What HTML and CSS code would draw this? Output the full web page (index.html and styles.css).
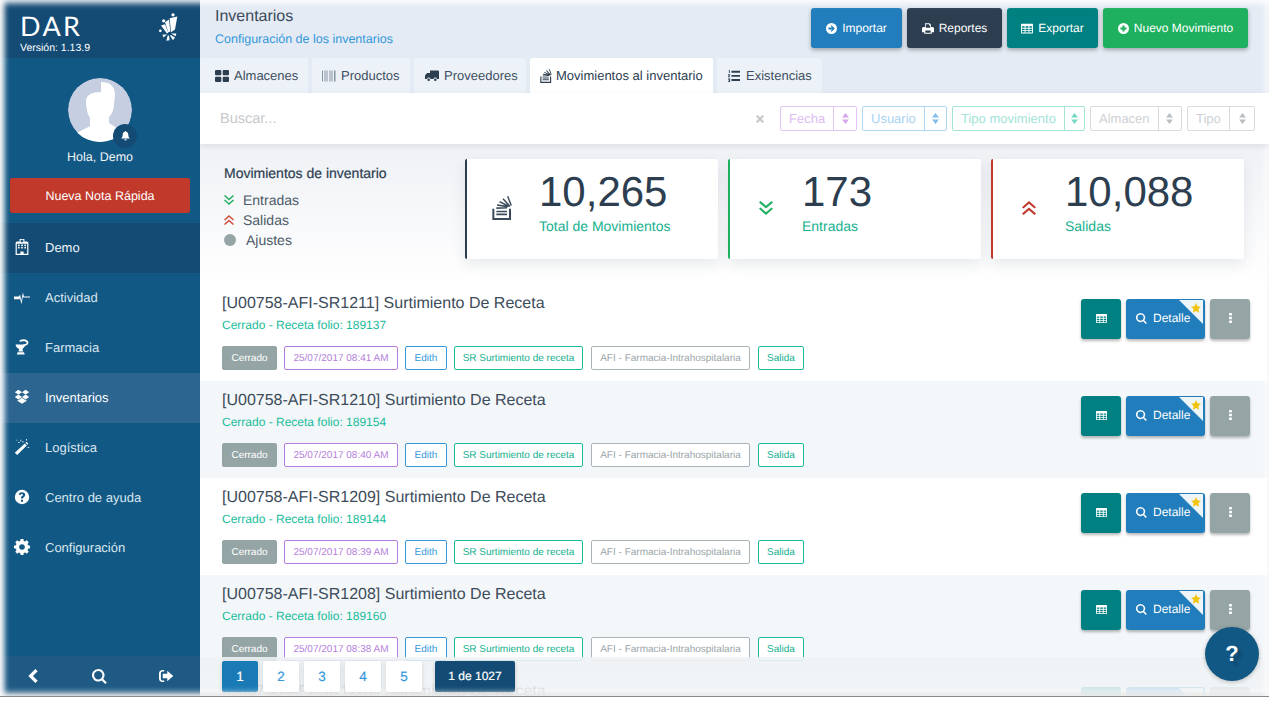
FILE: index.html
```html
<!DOCTYPE html>
<html lang="es">
<head>
<meta charset="utf-8">
<title>Inventarios</title>
<link rel="stylesheet" href="styles.css">
</head>
<body>
<svg class="defs" aria-hidden="true">
  <symbol id="i-hospital" viewBox="0 0 16 20"><path d="M5 0h6v3h3a2 2 0 0 1 2 2v15H0V5a2 2 0 0 1 2-2h3zm2 1v1H6v1h1v1h2V3h1V2H9V1zM1.500 6v12.500H6v-3h4v3h4.500V6zm1.500 1h2v2H3zm4 0h2v2H7zm4 0h2v2h-2zm-8 3h2v2H3zm4 0h2v2H7zm4 0h2v2h-2z" fill-rule="evenodd"/></symbol>
  <symbol id="i-pulse" viewBox="0 0 24 14"><path d="M0 6.200h7.500l1.600-3 1.800 9 2.400-12 1.700 6h9v1.600h-10l-.6-1.500-2.400 11.700-1.900-9.300-.8 1.700H0z"/></symbol>
  <symbol id="i-mortar" viewBox="0 0 18 20"><path d="M1 7h12a6.500 6.500 0 0 1-3.500 5.500l1 3H4.500l1-3A6.500 6.500 0 0 1 1 7zM3.500 16.500h8l1 3h-10z"/><path d="M6 1.500c5-2.500 11-1 11 3 0 3-3.500 4.500-6.500 4.500V7c2.500 0 4.300-1 4.300-2.500S11 2 6 3.500z"/></symbol>
  <symbol id="i-dropbox" viewBox="0 0 20 18"><path d="M5.500 0 10 3 5.500 6 1 3zM14.500 0 19 3l-4.500 3L10 3zM5.500 6 10 9l-4.500 3L1 9zM14.500 6 19 9l-4.500 3L10 9zM5.500 13l4.500-3 4.500 3 1-.6V14L10 17.500 4.500 14v-1.600z"/></symbol>
  <symbol id="i-wand" viewBox="0 0 20 20"><path d="M13.500 5.500 16 8 4 20l-3-2.800zM15.500 3.500 18 6l-1.200 1.200-2.500-2.500z"/><path d="M8 1h1v2H8zm-3 3h2v1H5zm5-1h2v1h-2zm7 7h2v1h-2zM15 0h1v2h-1zM3 1h1v1H3z"/></symbol>
  <symbol id="i-help" viewBox="0 0 20 20"><path fill-rule="evenodd" d="M10 1a9 9 0 1 1 0 18 9 9 0 0 1 0-18zM8.700 13.300v2.500h2.600v-2.500zM10 4.200c-2.100 0-3.500 1-4 2.700l2 .9c.4-.9 1-1.400 1.900-1.400.8 0 1.300.4 1.300 1 0 .7-.5 1-1.200 1.500-.9.600-1.300 1.300-1.300 2.200v.8h2.600v-.5c0-.5.300-.8 1-1.200 1-.7 1.700-1.500 1.700-2.900 0-1.800-1.600-3.100-4-3.100z"/></symbol>
  <symbol id="i-cog" viewBox="0 0 20 20"><path fill-rule="evenodd" d="M8.200 0h3.600l.4 2.500 1.700.7 2-1.500 2.500 2.500-1.500 2 .7 1.700 2.400.4v3.400l-2.400.4-.7 1.700 1.500 2-2.500 2.500-2-1.500-1.700.7-.4 2.400H8.200l-.4-2.400-1.700-.7-2 1.500-2.500-2.500 1.500-2-.7-1.700L0 11.700V8.300l2.400-.4.7-1.700-1.500-2 2.500-2.500 2 1.500 1.700-.7zM10 6.500a3.500 3.500 0 1 0 0 7 3.500 3.500 0 0 0 0-7z"/></symbol>
  <symbol id="i-left" viewBox="0 0 12 18"><path d="M9 0l3 3-6 6 6 6-3 3-9-9z"/></symbol>
  <symbol id="i-search" viewBox="0 0 18 18"><path fill-rule="evenodd" d="M7.500 0a7.500 7.500 0 0 1 6 12l4.300 4.200-1.900 1.800-4.200-4.300A7.500 7.500 0 1 1 7.500 0zm0 2.500a5 5 0 1 0 0 10 5 5 0 0 0 0-10z"/></symbol>
  <symbol id="i-signout" viewBox="0 0 20 16"><path d="M5 0h2v2H4.500C3.500 2 2.500 3 2.500 4v8c0 1 1 2 2 2H7v2H5C2 16 0 14 0 11.500v-7C0 2 2 0 5 0z"/><path d="M11 1l8 7-8 7v-4H5V5h6z"/></symbol>
  <symbol id="i-bell" viewBox="0 0 14 16"><path d="M7 0a1 1 0 0 1 1 1.100C10.300 1.500 11.500 3.300 11.500 6c0 3 .8 4.700 2.500 6H0c1.700-1.300 2.500-3 2.500-6C2.500 3.300 3.700 1.500 6 1.100A1 1 0 0 1 7 0zM5 13h4a2 2 0 0 1-4 0z"/></symbol>
  <symbol id="i-grid" viewBox="0 0 14 12"><rect width="6.300" height="5.300" rx="1"/><rect x="7.700" width="6.300" height="5.300" rx="1"/><rect y="6.700" width="6.300" height="5.300" rx="1"/><rect x="7.700" y="6.700" width="6.300" height="5.300" rx="1"/></symbol>
  <symbol id="i-barcode" viewBox="0 0 14 11"><path d="M0 0h1v11H0zm2 0h.5v11H2zm1.500 0h1v11h-1zm2 0H6v11h-.5zm1.500 0h.5v11H7zm1.500 0h1v11h-1zm2 0h.5v11h-.5zm1.500 0h1.500v11H12z"/></symbol>
  <symbol id="i-truck" viewBox="0 0 14 11"><path d="M5 0h8a1 1 0 0 1 1 1v7.500h-2a1.800 1.800 0 0 0-3.500 0H5.500a1.800 1.800 0 0 0-3.500 0H0V5l2-2.500h3z"/><circle cx="3.700" cy="9.200" r="1.300"/><circle cx="10.300" cy="9.200" r="1.300"/></symbol>
  <symbol id="i-stack" viewBox="0 0 16 18"><path d="M0 9.500h1.500v7h11v-7H14V18H0z"/><path d="M3 11h8v1.200H3zm0 2.200h8v1.200H3zM3 8.500l8-.3v1.200l-8 .3zM3.700 6.200l7.900 1.200-.2 1.200-7.900-1.200zM5.600 3.700l7 3.500-.5 1-7-3.500zM8.400 1.700l5.300 5.800-.8.800-5.300-5.800zM12 0l2.700 7-1 .4L11 .4z"/></symbol>
  <symbol id="i-listol" viewBox="0 0 14 14"><path d="M4 1h10v2.200H4zm0 4.800h10V8H4zm0 4.800h10v2.200H4zM1 0h1v3.500H1zM0 5h2.500v1L1 7.500h1.500v1H0v-1L1.500 6H0zm0 5h2.500v4H0v-1h1.500v-.5H.8v-1h.7V11H0z"/></symbol>
  <symbol id="i-arrow-circle" viewBox="0 0 16 16"><path fill-rule="evenodd" d="M8 0a8 8 0 1 1 0 16A8 8 0 0 1 8 0zm0 3.200L6.800 4.400l2 2.100H3.500v3h5.300l-2 2.100L8 12.800 12.800 8z"/></symbol>
  <symbol id="i-print" viewBox="0 0 16 14"><path fill-rule="evenodd" d="M4 0h6l2 2v3h2a2 2 0 0 1 2 2v5h-3v2H3v-2H0V7a2 2 0 0 1 2-2h2zm1 1.200V6h6V3h-1.500V1.200zM4.500 9.500v3.300h7V9.500z"/></symbol>
  <symbol id="i-table" viewBox="0 0 16 13"><path fill-rule="evenodd" d="M1 0h14a1 1 0 0 1 1 1v11a1 1 0 0 1-1 1H1a1 1 0 0 1-1-1V1a1 1 0 0 1 1-1zm.2 3.500v2h3.600v-2zm4.800 0v2h4v-2zm5.200 0v2h3.600v-2zM1.200 6.700v2h3.600v-2zm4.800 0v2h4v-2zm5.200 0v2h3.600v-2zM1.200 9.900v2h3.600v-2zm4.800 0v2h4v-2zm5.200 0v2h3.600v-2z"/></symbol>
  <symbol id="i-plus-circle" viewBox="0 0 16 16"><path fill-rule="evenodd" d="M8 0a8 8 0 1 1 0 16A8 8 0 0 1 8 0zM6.500 3.500v3h-3v3h3v3h3v-3h3v-3h-3v-3z"/></symbol>
  <symbol id="i-times" viewBox="0 0 10 10"><path d="M2 0l3 3 3-3 2 2-3 3 3 3-2 2-3-3-3 3-2-2 3-3-3-3z"/></symbol>
  <symbol id="i-sort" viewBox="0 0 10 16"><path d="M5 0l5 6.500H0zM5 16l5-6.500H0z"/></symbol>
  <symbol id="i-dbl-down" viewBox="0 0 14 14"><path d="M1.500 0 7 4.800 12.500 0 14 1.400 7 7.600 0 1.400zM1.500 6.400 7 11.200l5.500-4.800L14 7.800 7 14 0 7.800z"/></symbol>
  <symbol id="i-dbl-up" viewBox="0 0 14 14"><path d="M1.500 14 7 9.200l5.500 4.800 1.500-1.400-7-6.200-7 6.200zM1.500 7.600 7 2.800l5.500 4.800L14 6.200 7 0 0 6.200z"/></symbol>
  <symbol id="i-dots" viewBox="0 0 4 14"><rect width="4" height="3.400" rx=".5"/><rect y="5.300" width="4" height="3.400" rx=".5"/><rect y="10.600" width="4" height="3.400" rx=".5"/></symbol>
  <symbol id="i-star" viewBox="0 0 10 10"><path d="M5 0l1.500 3.300 3.500.4-2.600 2.400.7 3.600L5 8l-3.100 1.700.7-3.600L0 3.700l3.500-.4z"/></symbol>
  <symbol id="i-brand" viewBox="30 20 60 92"><circle cx="72" cy="28" r="5"/><circle cx="44" cy="46" r="5"/><circle cx="34" cy="76" r="4"/><path d="M62 38 85 33 78 72 66 80zM48 50 60 42 64 78 58 80zM36 60 48 56 58 82 54 84zM40 88 54 86 44 96zM56 90 60 90 62 104 52 106zM64 88 78 96 72 104 64 92zM66 84 82 84 80 92z"/></symbol>
</svg>

<div class="window">
  <aside class="sidebar">
    <div class="brand">
      <div class="brand-text">
        <div class="brand-name">DAR</div>
        <div class="brand-version">Versión: 1.13.9</div>
      </div>
      <svg class="brand-mark"><use href="#i-brand"/></svg>
    </div>
    <div class="profile">
      <div class="avatar">
        <svg class="avatar-pic" viewBox="0 0 64 64">
          <circle cx="32" cy="32" r="32" fill="#c5cfe1"/>
          <path d="M33 4c9 0 14 4 14 13l-1 9c0 5-2 10-5 13v6l14 9v10H5v-6c4-4 12-7 17-10v-8c-2-3-3-6-3-9-1-3-1-6-1-8 0-6 6-9 15-9z" fill="#fff"/>
        </svg>
        <span class="avatar-bell"><svg><use href="#i-bell"/></svg></span>
      </div>
      <div class="greeting">Hola, Demo</div>
      <button class="note-btn">Nueva Nota Rápida</button>
    </div>
    <nav class="menu">
      <a class="menu-item menu-dark"><svg class="menu-icon"><use href="#i-hospital"/></svg>Demo</a>
      <a class="menu-item"><svg class="menu-icon"><use href="#i-pulse"/></svg>Actividad</a>
      <a class="menu-item"><svg class="menu-icon"><use href="#i-mortar"/></svg>Farmacia</a>
      <a class="menu-item menu-active"><svg class="menu-icon"><use href="#i-dropbox"/></svg>Inventarios</a>
      <a class="menu-item"><svg class="menu-icon"><use href="#i-wand"/></svg>Logística</a>
      <a class="menu-item"><svg class="menu-icon"><use href="#i-help"/></svg>Centro de ayuda</a>
      <a class="menu-item"><svg class="menu-icon"><use href="#i-cog"/></svg>Configuración</a>
    </nav>
    <div class="side-foot">
      <svg class="foot-left"><use href="#i-left"/></svg>
      <svg class="foot-search"><use href="#i-search"/></svg>
      <svg class="foot-out"><use href="#i-signout"/></svg>
    </div>
  </aside>

  <main class="main">
    <header class="top">
      <div class="top-title">
        <h1>Inventarios</h1>
        <a class="top-link">Configuración de los inventarios</a>
      </div>
      <div class="top-actions">
        <button class="act act-blue"><svg><use href="#i-arrow-circle"/></svg>Importar</button>
        <button class="act act-navy"><svg><use href="#i-print"/></svg>Reportes</button>
        <button class="act act-teal"><svg><use href="#i-table"/></svg>Exportar</button>
        <button class="act act-green"><svg><use href="#i-plus-circle"/></svg>Nuevo Movimiento</button>
      </div>
    </header>

    <div class="tabs">
      <a class="tab tab-a"><svg><use href="#i-grid"/></svg>Almacenes</a>
      <a class="tab tab-b"><svg><use href="#i-barcode"/></svg>Productos</a>
      <a class="tab tab-c"><svg><use href="#i-truck"/></svg>Proveedores</a>
      <a class="tab tab-d tab-on"><svg><use href="#i-stack"/></svg>Movimientos al inventario</a>
      <a class="tab tab-e"><svg><use href="#i-listol"/></svg>Existencias</a>
    </div>

    <div class="searchbar">
      <span class="search-input">Buscar...</span>
      <span class="clear"><svg><use href="#i-times"/></svg></span>
      <div class="select sel-purple"><span>Fecha</span><i><svg><use href="#i-sort"/></svg></i></div>
      <div class="select sel-blue"><span>Usuario</span><i><svg><use href="#i-sort"/></svg></i></div>
      <div class="select sel-green"><span>Tipo movimiento</span><i><svg><use href="#i-sort"/></svg></i></div>
      <div class="select sel-gray sel-wide"><span>Almacen</span><i><svg><use href="#i-sort"/></svg></i></div>
      <div class="select sel-gray sel-short"><span>Tipo</span><i><svg><use href="#i-sort"/></svg></i></div>
    </div>

    <section class="stats">
      <div class="legend">
        <h2>Movimientos de inventario</h2>
        <div class="legend-item"><svg class="lg-down"><use href="#i-dbl-down"/></svg>Entradas</div>
        <div class="legend-item"><svg class="lg-up"><use href="#i-dbl-up"/></svg>Salidas</div>
        <div class="legend-item legend-dot"><b></b>Ajustes</div>
      </div>
      <div class="card card-navy">
        <svg class="card-icon ci-stack"><use href="#i-stack"/></svg>
        <div><div class="card-num">10,265</div><div class="card-label">Total de Movimientos</div></div>
      </div>
      <div class="card card-green">
        <svg class="card-icon ci-down"><use href="#i-dbl-down"/></svg>
        <div><div class="card-num">173</div><div class="card-label">Entradas</div></div>
      </div>
      <div class="card card-red">
        <svg class="card-icon ci-up"><use href="#i-dbl-up"/></svg>
        <div><div class="card-num">10,088</div><div class="card-label">Salidas</div></div>
      </div>
    </section>

    <section class="list">
      <article class="row">
        <div class="row-info">
          <h3>[U00758-AFI-SR1211] Surtimiento De Receta</h3>
          <p>Cerrado - Receta folio: 189137</p>
          <div class="tags"><span class="tag t-closed">Cerrado</span><span class="tag t-date">25/07/2017 08:41 AM</span><span class="tag t-user">Edith</span><span class="tag t-type">SR Surtimiento de receta</span><span class="tag t-place">AFI - Farmacia-Intrahospitalaria</span><span class="tag t-out">Salida</span></div>
        </div>
        <div class="row-actions"><button class="ra ra-table"><svg><use href="#i-table"/></svg></button><button class="ra ra-detail"><svg><use href="#i-search"/></svg>Detalle<span class="fold"></span><svg class="fold-star"><use href="#i-star"/></svg></button><button class="ra ra-more"><svg><use href="#i-dots"/></svg></button></div>
      </article>
      <article class="row row-alt">
        <div class="row-info">
          <h3>[U00758-AFI-SR1210] Surtimiento De Receta</h3>
          <p>Cerrado - Receta folio: 189154</p>
          <div class="tags"><span class="tag t-closed">Cerrado</span><span class="tag t-date">25/07/2017 08:40 AM</span><span class="tag t-user">Edith</span><span class="tag t-type">SR Surtimiento de receta</span><span class="tag t-place">AFI - Farmacia-Intrahospitalaria</span><span class="tag t-out">Salida</span></div>
        </div>
        <div class="row-actions"><button class="ra ra-table"><svg><use href="#i-table"/></svg></button><button class="ra ra-detail"><svg><use href="#i-search"/></svg>Detalle<span class="fold"></span><svg class="fold-star"><use href="#i-star"/></svg></button><button class="ra ra-more"><svg><use href="#i-dots"/></svg></button></div>
      </article>
      <article class="row">
        <div class="row-info">
          <h3>[U00758-AFI-SR1209] Surtimiento De Receta</h3>
          <p>Cerrado - Receta folio: 189144</p>
          <div class="tags"><span class="tag t-closed">Cerrado</span><span class="tag t-date">25/07/2017 08:39 AM</span><span class="tag t-user">Edith</span><span class="tag t-type">SR Surtimiento de receta</span><span class="tag t-place">AFI - Farmacia-Intrahospitalaria</span><span class="tag t-out">Salida</span></div>
        </div>
        <div class="row-actions"><button class="ra ra-table"><svg><use href="#i-table"/></svg></button><button class="ra ra-detail"><svg><use href="#i-search"/></svg>Detalle<span class="fold"></span><svg class="fold-star"><use href="#i-star"/></svg></button><button class="ra ra-more"><svg><use href="#i-dots"/></svg></button></div>
      </article>
      <article class="row row-alt">
        <div class="row-info">
          <h3>[U00758-AFI-SR1208] Surtimiento De Receta</h3>
          <p>Cerrado - Receta folio: 189160</p>
          <div class="tags"><span class="tag t-closed">Cerrado</span><span class="tag t-date">25/07/2017 08:38 AM</span><span class="tag t-user">Edith</span><span class="tag t-type">SR Surtimiento de receta</span><span class="tag t-place">AFI - Farmacia-Intrahospitalaria</span><span class="tag t-out">Salida</span></div>
        </div>
        <div class="row-actions"><button class="ra ra-table"><svg><use href="#i-table"/></svg></button><button class="ra ra-detail"><svg><use href="#i-search"/></svg>Detalle<span class="fold"></span><svg class="fold-star"><use href="#i-star"/></svg></button><button class="ra ra-more"><svg><use href="#i-dots"/></svg></button></div>
      </article>
      <article class="row">
        <div class="row-info">
          <h3>[U00758-AFI-SR1207] Surtimiento De Receta</h3>
        </div>
        <div class="row-actions"><button class="ra ra-table"><svg><use href="#i-table"/></svg></button><button class="ra ra-detail"><svg><use href="#i-search"/></svg>Detalle<span class="fold"></span><svg class="fold-star"><use href="#i-star"/></svg></button><button class="ra ra-more"><svg><use href="#i-dots"/></svg></button></div>
      </article>
    </section>

    <div class="pager">
      <a class="page page-on">1</a>
      <a class="page">2</a>
      <a class="page">3</a>
      <a class="page">4</a>
      <a class="page">5</a>
      <span class="page-total">1 de 1027</span>
    </div>
    <button class="help"><span class="help-q">?</span></button>
  </main>
  <div class="edge"></div>
</div>
</body>
</html>
```

FILE: styles.css
```css
* { box-sizing: border-box; }
html, body { margin: 0; height: 100%; overflow: hidden; background: #fff; }
body { font-family: "Liberation Sans", Arial, sans-serif; color: #2c3e50; text-rendering: geometricPrecision; }
button { font-family: inherit; border: 0; cursor: pointer; text-rendering: geometricPrecision; }
svg { fill: currentColor; display: block; }
.defs { position: absolute; width: 0; height: 0; }

.window { position: relative; display: flex; height: 697px; overflow: hidden; border-bottom: 1px solid #8a8a8a; }
.edge { position: absolute; inset: 0; pointer-events: none; box-shadow: inset 0 0 6px 3px rgba(255,255,255,.95), inset 6px 0 6px -3px rgba(255,255,255,.8), inset 0 -2px 3px rgba(90,90,90,.45); }

/* sidebar */
.sidebar { width: 200px; flex: none; background: #125884; color: #fff; display: flex; flex-direction: column; }
.brand { height: 58px; background: #134b75; display: flex; justify-content: space-between; padding: 13px 21px 0 20px; }
.brand-name { font-family: "Lato", sans-serif; font-size: 27px; line-height: 25px; letter-spacing: 2.4px; }
.brand-version { font-size: 10.500px; line-height: 12px; margin-top: 4px; }
.brand-mark { width: 20px; height: 31px; margin-top: -1px; }
.profile { height: 165px; display: flex; flex-direction: column; align-items: center; padding-top: 20px; }
.avatar { position: relative; width: 64px; height: 64px; }
.avatar-pic { width: 64px; height: 64px; border-radius: 50%; }
.avatar-bell { position: absolute; left: 45px; top: 46px; width: 24px; height: 24px; border-radius: 50%; background: #134b75; display: flex; align-items: center; justify-content: center; }
.avatar-bell svg { width: 9px; height: 10px; }
.greeting { font-size: 12.500px; line-height: 16px; margin-top: 7px; color: #eef3f7; }
.note-btn { width: 180px; height: 35px; margin-top: 13px; background: #c0392b; color: #fff; font-size: 12.500px; border-radius: 2px; flex: none; }
.menu { flex: 1; display: flex; flex-direction: column; }
.menu-item { height: 50px; display: flex; align-items: center; font-size: 13px; color: #d9e6ef; padding: 0 0 2px 14px; gap: 15px; }
.menu-dark { background: #134b75; color: #f0f5f8; }
.menu-active { background: #2c6590; color: #fff; }
.menu-icon { width: 16px; height: 16px; color: #fff; flex: none; }
.side-foot { height: 40px; background: #1f5a85; display: grid; grid-template-columns: repeat(3, 1fr); align-items: center; justify-items: center; }
.foot-left { width: 10px; height: 14px; }
.foot-search { width: 15px; height: 15px; }
.foot-out { width: 15px; height: 12px; }

/* main */
.main { position: relative; flex: 1; min-width: 0; display: flex; flex-direction: column; overflow: hidden; background: #fff; }
.top { height: 58px; flex: none; background: #e4ebf4; display: flex; justify-content: space-between; padding: 8px 21px 0 15px; }
.top-title h1 { margin: 1px 0 0; font-size: 16px; font-weight: normal; line-height: 16px; color: #3a4a5a; }
.top-link { display: block; font-size: 12.500px; line-height: 15px; margin-top: 7px; color: #3498db; }
.top-actions { display: flex; gap: 5px; }
.act { height: 40px; color: #fff; font-size: 12px; border-radius: 3px; display: flex; align-items: center; justify-content: center; gap: 5px; box-shadow: 0 2px 4px rgba(0,0,0,.3); }
.act svg { width: 11px; height: 11px; }
.act-navy svg, .act-teal svg { width: 12px; }
.act-blue { width: 91px; background: #217dbb; }
.act-navy { width: 95px; background: #2c3e50; }
.act-teal { width: 91px; background: #008080; }
.act-green { width: 145px; background: #1eb05e; }

.tabs { height: 35px; flex: none; background: #e4ebf4; display: flex; gap: 4px; }
.tab { display: flex; align-items: center; gap: 5px; height: 35px; font-size: 13px; color: #3f4f5f; background: #edf2f8; border-radius: 3px 3px 0 0; padding-left: 15px; white-space: nowrap; }
.tab svg { width: 14px; height: 12px; color: #2c3e50; }
.tab-a { width: 108px; }
.tab-b { width: 98px; padding-left: 10px; }
.tab-b svg { color: #8795a3; }
.tab-c { width: 112px; padding-left: 11px; }
.tab-d { width: 183px; padding-left: 10px; gap: 3px; }
.tab-d svg { width: 13px; height: 14px; }
.tab-e { width: 105px; padding-left: 10px; }
.tab-on { background: #fff; color: #2c3e50; }

.searchbar { height: 51px; flex: none; background: #fff; display: flex; align-items: center; padding: 0 14px 0 20px; gap: 5px; box-shadow: 0 2px 6px rgba(44,62,80,.1); position: relative; z-index: 1; }
.search-input { flex: 1; font-size: 14.500px; color: #c6c9cc; }
.clear { width: 31px; height: 25px; display: flex; align-items: center; justify-content: center; color: #c5c9cc; }
.clear svg { width: 8px; height: 8px; }
.select { height: 25px; display: flex; border: 1px solid; border-radius: 2px; font-size: 13px; align-items: stretch; flex: none; white-space: nowrap; }
.select span { display: flex; align-items: center; padding: 0 8px; }
.select i { width: 25px; border-left: 1px solid; display: flex; align-items: center; justify-content: center; border-color: inherit; margin-left: auto; }
.select i svg { width: 7px; height: 11px; }
.sel-purple { border-color: #e2c6f3; color: #dcbcf2; width: 77px; }
.sel-purple i { color: #d3a6ee; }
.sel-blue { border-color: #aed6f5; color: #a9d3f4; width: 85px; }
.sel-blue i { color: #7fbdec; }
.sel-green { border-color: #a3e4d7; color: #a3e4d7; width: 133px; }
.sel-green i { color: #76d7c4; }
.sel-gray { border-color: #d9dcdf; color: #ced1d4; }
.sel-gray i { color: #b8bec2; }
.sel-wide { width: 92px; }
.sel-short { width: 68px; }

/* stats */
.stats { height: 140px; flex: none; display: flex; gap: 10px; padding: 15px 0 0 24px; background: linear-gradient(#eff1f5, #fff); }
.legend { width: 231px; flex: none; padding-top: 6px; }
.legend h2 { margin: 0 0 9px; font-size: 14px; font-weight: normal; line-height: 16px; color: #2c3e50; -webkit-text-stroke: .2px #2c3e50; }
.legend-item { display: flex; align-items: center; height: 20px; font-size: 14px; color: #4c5a67; gap: 9px; }
.legend-item svg { width: 10px; height: 10px; }
.lg-down { color: #27ae60; }
.lg-up { color: #d0503f; }
.legend-dot { gap: 10px; }
.legend-dot b { width: 12px; height: 12px; border-radius: 50%; background: #95a5a6; }
.card { width: 253px; height: 100px; background: #fff; border-left: 2px solid; border-radius: 2px; display: flex; box-shadow: 0 5px 14px rgba(44,62,80,.1); padding: 11px 0 0 0; }
.card-navy { border-color: #2c3e50; }
.card-green { border-color: #1eb05e; }
.card-red { border-color: #c0392b; }
.card-icon { width: 72px; flex: none; }
.ci-stack { height: 24px; margin-top: 26px; color: #3b4b5b; }
.ci-down { height: 14px; margin-top: 31px; color: #1eb05e; }
.ci-up { height: 14px; margin-top: 31px; color: #c0392b; }
.card-num { font-size: 42px; line-height: 44px; color: #2c3e50; }
.card-label { font-size: 14px; line-height: 18px; margin-top: 3px; color: #16b08f; }

/* list */
.list { flex: none; }
.row { height: 97px; display: flex; justify-content: space-between; padding: 9px 19px 0 22px; background: #fff; }
.row-alt { background: #f3f7f9; }
.row-info h3 { margin: 1px 0 0; font-size: 16px; font-weight: normal; line-height: 20px; color: #3d4c5b; }
.row-info p { margin: 4px 0 0; font-size: 12px; line-height: 14px; color: #1abc9c; }
.tags { display: flex; gap: 7px; margin-top: 14px; }
.tag { height: 24px; display: flex; align-items: center; justify-content: center; font-size: 10px; border: 1px solid; border-radius: 2px; background: #fff; flex: none; white-space: nowrap; }
.t-closed { background: #95a5a6; border-color: #95a5a6; color: #fff; width: 55px; }
.t-date { border-color: #b57edc; color: #b57edc; width: 114px; }
.t-user { border-color: #3498db; color: #3498db; width: 42px; }
.t-type { border-color: #1abc9c; color: #14b08f; width: 129px; }
.t-place { border-color: #aab4b8; color: #9aa5a9; width: 159px; margin: 0 1px; }
.t-out { border-color: #1abc9c; color: #14b08f; width: 46px; }
.row-actions { display: flex; gap: 5px; margin-top: 6px; height: 40px; }
.ra { height: 40px; color: #fff; border-radius: 3px; display: flex; align-items: center; justify-content: center; box-shadow: 0 2px 3px rgba(0,0,0,.28); position: relative; overflow: hidden; font-size: 12px; padding: 0 0 2px; }
.ra-table { width: 40px; background: #008080; }
.ra-table svg { width: 11px; height: 9px; }
.ra-detail { width: 79px; background: #217dbb; gap: 6px; justify-content: flex-start; padding-left: 10px; }
.ra-detail > svg:first-child { width: 11px; height: 11px; }
.ra-more { width: 40px; background: #95a5a6; }
.ra-more svg { width: 3px; height: 10px; }
.fold { position: absolute; top: 1px; right: 2px; width: 0; height: 0; border-top: 24px solid #eef5f9; border-left: 24px solid transparent; }
.ra-detail .fold-star { position: absolute; top: 4px; right: 4px; width: 10px; height: 10px; color: #f1c40f; }

/* footer */
.pager { position: absolute; left: 0; right: 0; top: 657px; height: 40px; display: flex; align-items: center; gap: 5px; padding: 0 0 2px 22px; background: rgba(239,243,245,.88); }
.page { width: 36px; height: 31px; display: flex; align-items: center; justify-content: center; font-size: 13.500px; color: #3498db; background: #fff; border-radius: 2px; box-shadow: 0 2px 4px rgba(0,0,0,.15); -webkit-text-stroke: .2px currentColor; }
.page-on { background: #1a7ab5; color: #fff; }
.page-total { width: 80px; height: 31px; margin-left: 8px; background: #134b75; color: #fff; font-size: 12px; border-radius: 2px; display: flex; align-items: center; justify-content: center; box-shadow: 0 2px 4px rgba(0,0,0,.2); -webkit-text-stroke: .2px currentColor; }
.help { position: absolute; left: 1005px; top: 627px; width: 54px; height: 54px; border-radius: 50%; background: #125884; color: #fff; padding: 0; display: flex; align-items: center; justify-content: center; box-shadow: 0 1px 4px rgba(0,0,0,.25); }
.help-q { font-size: 22px; font-weight: bold; text-shadow: 4px 4px 3px #0e4568; }
```
